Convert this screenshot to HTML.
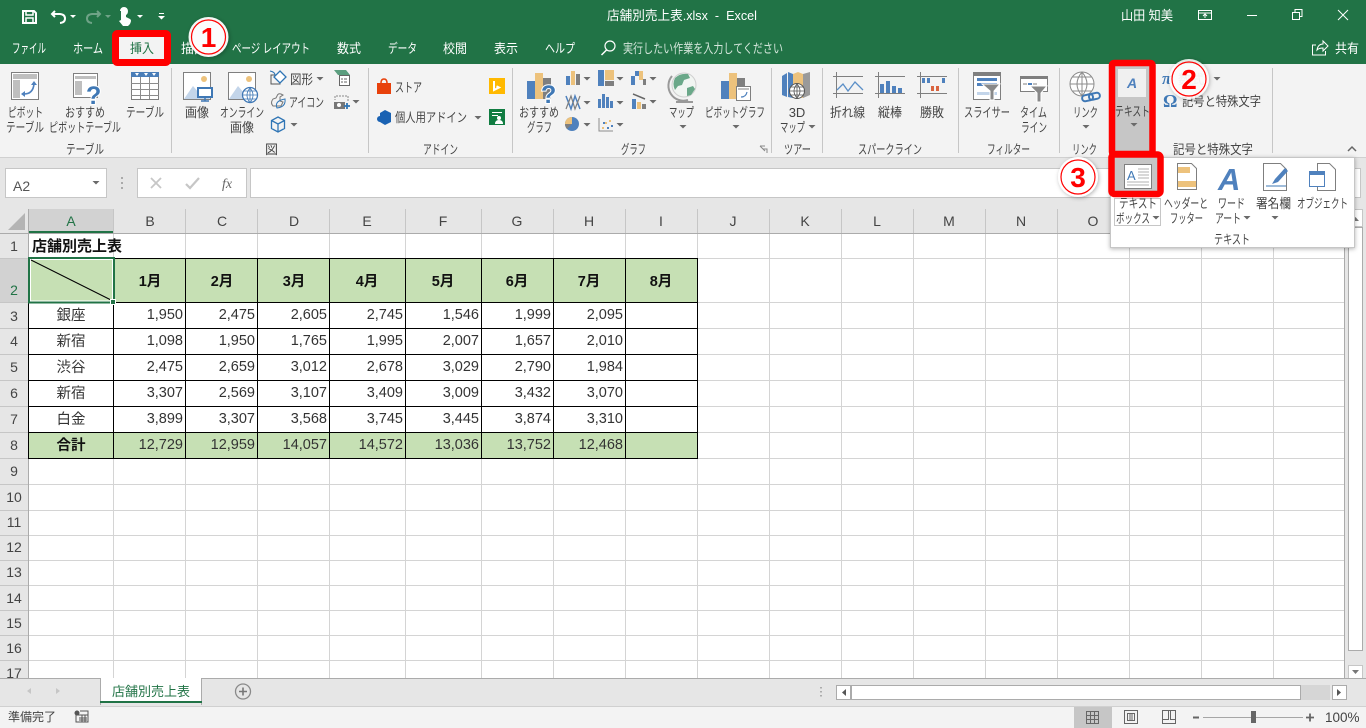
<!DOCTYPE html>
<html lang="ja"><head><meta charset="utf-8"><title>店舗別売上表.xlsx - Excel</title>
<style>
html,body{margin:0;padding:0;background:#fff;width:1366px;height:728px;overflow:hidden}
svg{display:block}
text{font-family:"Liberation Sans","Noto Sans CJK JP",sans-serif;white-space:pre}
.w{fill:#fff;font-size:13px}
.l{fill:#444;font-size:13px}
.g{fill:#444;font-size:13px}
.h{fill:#444;font-size:14px;text-anchor:middle}
.r{fill:#444;font-size:14px;text-anchor:middle}
.n{fill:#333;font-size:14.5px;text-anchor:end}
.c{fill:#333;font-size:14.5px;text-anchor:middle}
.b{fill:#111;font-size:14.5px;font-weight:bold;text-anchor:middle}
.m{text-anchor:middle}
.d{fill:none;stroke:#d4d4d4}
</style></head><body>
<svg xmlns="http://www.w3.org/2000/svg" width="1366" height="728" viewBox="0 0 1366 728">
<defs>
<path id="d" d="M-3.500 0h7l-3.500 3.500z" fill="#6a6a6a"/>
<filter id="sh" x="-30%" y="-30%" width="160%" height="160%"><feDropShadow dx="1" dy="1" stdDeviation="2" flood-color="#000" flood-opacity=".3"/></filter>
<filter id="ps" x="-5%" y="-5%" width="110%" height="115%"><feDropShadow dx="0" dy="1" stdDeviation="2" flood-color="#000" flood-opacity=".3"/></filter>
</defs>
<!-- backgrounds -->
<rect width="1366" height="64" fill="#217346"/>
<rect y="64" width="1366" height="93" fill="#f3f3f3"/>
<rect y="157" width="1366" height="51" fill="#e6e6e6"/>
<rect y="157" width="1366" height="1" fill="#d0d0d0"/>
<!-- QAT -->
<g fill="none" stroke="#fff" stroke-width="2">
<path d="M23 11h11l2 2v10H23z"/><path d="M26 11v4h7v-4M26 23v-5h7v5" stroke-width="1.500"/>
<path d="M55 11l-3 3 3 3M52 14H60q5 .5 5 4.500t-5 4.500"/>
<path d="M97 11l3 3-3 3M100 14H92q-5 .5-5 4.500t5 4.500" stroke="#6fa387"/>
</g>
<path d="M70 15h6l-3 3z" fill="#fff"/><path d="M105 15h6l-3 3z" fill="#6fa387"/>
<path d="M120 11a4 4 0 0 1 8 0q0 3-2 4v2l4 2q2 1 0 5l-2 2h-5l-4-5 2-1v-9z" fill="#fff"/>
<path d="M137 15h6l-3 3z" fill="#fff"/><path d="M159 13h5v1h-5zM158 16h7l-3.500 3.500z" fill="#fff"/>
<!-- title -->
<text class="w" x="607" y="20" textLength="150" lengthAdjust="spacingAndGlyphs">店舗別売上表.xlsx  -  Excel</text>
<text class="w" x="1121" y="20" textLength="52" lengthAdjust="spacingAndGlyphs">山田 知美</text>
<g fill="none" stroke="#fff">
<path d="M1198.500 10.500h13v9h-13zM1198.500 13h13M1205 18v-3.500M1203 16l2-2 2 2"/>
<path d="M1247 15.500h10"/>
<path d="M1292.500 12.500h7v7h-7zM1295 12v-2.500h7v7h-2.500"/>
<path d="M1338 10l10 10M1348 10l-10 10"/>
</g>
<!-- tabs -->
<text class="w" x="12" y="53" textLength="34" lengthAdjust="spacingAndGlyphs">ファイル</text>
<text class="w" x="73" y="53" textLength="30" lengthAdjust="spacingAndGlyphs">ホーム</text>
<text class="w" x="181" y="53" textLength="26" lengthAdjust="spacingAndGlyphs">描画</text>
<text class="w" x="232" y="53" textLength="78" lengthAdjust="spacingAndGlyphs">ページ レイアウト</text>
<text class="w" x="337" y="53" textLength="24" lengthAdjust="spacingAndGlyphs">数式</text>
<text class="w" x="388" y="53" textLength="29" lengthAdjust="spacingAndGlyphs">データ</text>
<text class="w" x="443" y="53" textLength="24" lengthAdjust="spacingAndGlyphs">校閲</text>
<text class="w" x="494" y="53" textLength="24" lengthAdjust="spacingAndGlyphs">表示</text>
<text class="w" x="545" y="53" textLength="30" lengthAdjust="spacingAndGlyphs">ヘルプ</text>
<circle cx="610" cy="46" r="5" fill="none" stroke="#fff" stroke-width="1.200"/><path d="M606.500 50l-5 5" stroke="#fff" stroke-width="1.500"/>
<text x="623" y="53" font-size="13" fill="#d3e5da" textLength="160" lengthAdjust="spacingAndGlyphs">実行したい作業を入力してください</text>
<path d="M1316 45h-3.500v10h13v-4M1317 50q1-6 6-6v-3l5 5-5 5v-3q-4 0-6 2z" fill="none" stroke="#fff"/>
<text class="w" x="1335" y="53" textLength="24" lengthAdjust="spacingAndGlyphs">共有</text>
<!-- insert tab -->
<rect x="115.500" y="33.500" width="52" height="29" rx="2" fill="#f3f3f3" stroke="#f00" stroke-width="7"/>
<text x="130" y="53" font-size="13" fill="#217346" textLength="24" lengthAdjust="spacingAndGlyphs">挿入</text>
<!-- separators -->
<path d="M171.500 68v85M368.500 68v85M512.500 68v85M771.500 68v85M822.500 68v85M958.500 68v85M1059.500 68v85M1272.500 68v85" stroke="#c6c6c6"/>
<!-- Table group -->
<rect x="11.500" y="72.500" width="27" height="27" fill="#fff" stroke="#7f7f7f"/><rect x="13" y="74" width="24" height="5" fill="#bfbfbf"/><rect x="13" y="80" width="7" height="18" fill="#bfbfbf"/>
<path d="M24 94q9 0 10-10" fill="none" stroke="#4f81bd" stroke-width="1.600"/><path d="M21 94l4-3v6zM34 81l-3 4h6z" fill="#4f81bd"/>
<rect x="73.500" y="73.500" width="24" height="24" fill="#fff" stroke="#7f7f7f"/><rect x="75" y="76" width="21" height="3" fill="#bfbfbf"/><rect x="75" y="81" width="7" height="14" fill="#bfbfbf"/>
<text x="86" y="104" font-size="25" font-weight="bold" fill="#fff" stroke="#fff" stroke-width="2">?</text>
<text x="86" y="104" font-size="25" font-weight="bold" fill="#3f78b5">?</text>
<rect x="131.500" y="72.500" width="27" height="27" fill="#fff" stroke="#7f7f7f"/><rect x="131" y="72" width="28" height="5" fill="#4a7eb8"/><path d="M131 83.500h28M131 89.500h28M131 95.500h28M140.500 77v22M149.500 77v22" stroke="#8c8c8c"/>
<path d="M135 73l2 3 2-3zM144 73l2 3 2-3zM152 73l2 3 2-3z" fill="#fff"/>
<!-- picture -->
<g id="pic"><rect x="183.500" y="72.500" width="27" height="27" fill="#fff" stroke="#7f7f7f"/><circle cx="204" cy="79" r="3" fill="#edc27c"/><path d="M184 99l9-13 6 7 4-4 7 10z" fill="#c3d5ea"/></g>
<rect x="198" y="88" width="14" height="9" fill="#fff" stroke="#3f78b5" stroke-width="2"/><path d="M201 101h8M205 97v4" stroke="#3f78b5" stroke-width="1.500"/>
<rect x="228.500" y="72.500" width="27" height="27" fill="#fff" stroke="#7f7f7f"/><circle cx="249" cy="79" r="3" fill="#edc27c"/><path d="M229 99l9-13 6 7 4-4 7 10z" fill="#c3d5ea"/>
<circle cx="250" cy="95" r="7.500" fill="#fff" stroke="#3f78b5" stroke-width="1.300"/><path d="M243 95h15M244 91h12M244 99h12M250 88v15M250 88q-6 7 0 15M250 88q6 7 0 15" fill="none" stroke="#3f78b5" stroke-width=".8"/>
<path d="M271 75h9v9h-9z" fill="none" stroke="#555"/><path d="M280 71l6 6-6 6-6-6z" fill="#fff" stroke="#2f75b5" stroke-width="1.300"/>
<path d="M270 71q5 1 5 4" fill="none" stroke="#2f75b5"/>
<path d="M277 96q1-3 4-2l2 1-3 2v4l3 1-2 4h-8q-3-3 0-7l3-1z" fill="none" stroke="#777"/><path d="M277 108q-3-7 8-9q1 8-8 9z" fill="none" stroke="#2f75b5"/>
<path d="M278 117l6.500 3.500v8L278 132l-6.500-3.500v-8zM271.500 120.500l6.500 3.500 6.500-3.500M278 124v8" fill="none" stroke="#2f75b5" stroke-width="1.300"/>
<text class="l" x="290" y="84" textLength="23" lengthAdjust="spacingAndGlyphs">図形</text><use href="#d" x="320" y="77"/>
<text class="l" x="289" y="107" textLength="35" lengthAdjust="spacingAndGlyphs">アイコン</text>
<use href="#d" x="294" y="123"/>
<path d="M334 70h12l4 5h-12z" fill="#5c9e7f"/><rect x="339.500" y="75.500" width="10" height="10" fill="#fff" stroke="#666"/><path d="M341 79h2M344 79h3M341 82h2M344 82h3" stroke="#666"/>
<path d="M336 96h12v5M335 96v4" stroke="#888" stroke-dasharray="2 1" fill="none"/><rect x="334" y="102" width="11" height="7" fill="#777"/><circle cx="339" cy="105" r="2" fill="#fff"/><path d="M344 106h6M347 103v6" stroke="#2f75b5" stroke-width="1.800"/>
<use href="#d" x="356" y="100"/>
<!-- labels -->
<text class="l" x="8" y="117" textLength="35" lengthAdjust="spacingAndGlyphs">ピボット</text>
<text class="l" x="6" y="132" textLength="38" lengthAdjust="spacingAndGlyphs">テーブル</text>
<text class="l" x="65" y="117" textLength="40" lengthAdjust="spacingAndGlyphs">おすすめ</text>
<text class="l" x="49" y="132" textLength="72" lengthAdjust="spacingAndGlyphs">ピボットテーブル</text>
<text class="l" x="126" y="117" textLength="38" lengthAdjust="spacingAndGlyphs">テーブル</text>
<text class="l" x="185" y="117" textLength="24" lengthAdjust="spacingAndGlyphs">画像</text>
<text class="l" x="220" y="117" textLength="44" lengthAdjust="spacingAndGlyphs">オンライン</text>
<text class="l" x="230" y="132" textLength="24" lengthAdjust="spacingAndGlyphs">画像</text>
<text class="g" x="66" y="154" textLength="38" lengthAdjust="spacingAndGlyphs">テーブル</text>
<text class="g" x="265" y="154">図</text>
<text class="g" x="423" y="154" textLength="35" lengthAdjust="spacingAndGlyphs">アドイン</text>
<text class="g" x="621" y="154" textLength="25" lengthAdjust="spacingAndGlyphs">グラフ</text>
<text class="g" x="784" y="154" textLength="27" lengthAdjust="spacingAndGlyphs">ツアー</text>
<text class="g" x="858" y="154" textLength="64" lengthAdjust="spacingAndGlyphs">スパークライン</text>
<text class="g" x="987" y="154" textLength="43" lengthAdjust="spacingAndGlyphs">フィルター</text>
<text class="g" x="1072" y="154" textLength="25" lengthAdjust="spacingAndGlyphs">リンク</text>
<text class="g" x="1173" y="154" textLength="80" lengthAdjust="spacingAndGlyphs">記号と特殊文字</text>
<path d="M763 149h4v4M760 146l5 5M760 146h5" fill="none" stroke="#888"/>
<path d="M1348 151l4-4 4 4" fill="none" stroke="#666" stroke-width="1.500"/>
<!-- add-ins -->
<path d="M377 83h14v11h-14z" fill="#e8410b"/><path d="M381 83q0-4 3-4t3 4" fill="none" stroke="#e8410b" stroke-width="1.500"/>
<text class="l" x="395" y="92" textLength="27" lengthAdjust="spacingAndGlyphs">ストア</text>
<path d="M385 110l6 3v9l-6 3-5-3v-9z" fill="#1a62b3"/><circle cx="380" cy="119" r="3" fill="#1a62b3"/>
<text class="l" x="395" y="122" textLength="72" lengthAdjust="spacingAndGlyphs">個人用アドイン</text><use href="#d" x="478" y="116"/>
<rect x="489" y="78" width="16" height="16" fill="#ffb900"/><path d="M494 81v9l5-2.500-2.500-1.200" fill="none" stroke="#fff" stroke-width="2"/>
<rect x="489" y="109" width="16" height="16" fill="#107c41"/><path d="M492 112h10v1h-10zM492 115h6v1h-6z" fill="#fff"/><circle cx="499" cy="118" r="2" fill="#fff"/><path d="M495 124q0-4 4-4t4 4z" fill="#fff"/>
<!-- charts -->
<g id="bars"><rect x="527" y="81" width="8" height="18" fill="#4f81bd"/><rect x="535" y="73" width="8" height="26" fill="#edc27c"/><rect x="543" y="78" width="8" height="21" fill="#7f7f7f"/></g>
<text x="541" y="103" font-size="25" font-weight="bold" fill="#fff" stroke="#fff" stroke-width="2">?</text>
<text x="541" y="103" font-size="25" font-weight="bold" fill="#3f78b5">?</text>
<text class="l" x="519" y="117" textLength="40" lengthAdjust="spacingAndGlyphs">おすすめ</text>
<text class="l" x="527" y="132" textLength="25" lengthAdjust="spacingAndGlyphs">グラフ</text>
<rect x="566" y="76" width="4" height="9" fill="#4f81bd"/><rect x="571" y="71" width="4" height="14" fill="#edc27c"/><rect x="576" y="74" width="4" height="11" fill="#7f7f7f"/><use href="#d" x="587" y="77"/>
<path d="M566 96l5 13 4-13 5 13" fill="none" stroke="#4f81bd" stroke-width="1.500"/><path d="M566 109l5-13 4 13 5-13" fill="none" stroke="#7f7f7f" stroke-width="1.200"/><use href="#d" x="587" y="101"/>
<circle cx="572" cy="124" r="7" fill="#4f81bd"/><path d="M572 124v-7a7 7 0 0 0-7 7z" fill="#edc27c"/><path d="M572 124h-7a7 7 0 0 0 2 5z" fill="#7f7f7f"/><use href="#d" x="587" y="123"/>
<rect x="598" y="70" width="6" height="16" fill="#4f81bd"/><rect x="605" y="70" width="9" height="10" fill="#edc27c"/><rect x="605" y="81" width="9" height="5" fill="#7f7f7f"/><use href="#d" x="620" y="77"/>
<rect x="598" y="99" width="3" height="9" fill="#4f81bd"/><rect x="602" y="94" width="3" height="14" fill="#4f81bd"/><rect x="606" y="97" width="3" height="11" fill="#4f81bd"/><rect x="610" y="101" width="3" height="7" fill="#4f81bd"/><use href="#d" x="620" y="101"/>
<path d="M599 118v13h14" fill="none" stroke="#8c8c8c"/><path d="M602 127h2v2h-2zM605 122h2v2h-2zM609 120h2v2h-2z" fill="#edc27c"/><path d="M603 122h2v2h-2zM607 127h2v2h-2zM611 125h2v2h-2z" fill="#4f81bd"/><use href="#d" x="620" y="123"/>
<path d="M631 76h4v9h-4zM635 71h4v5h-4z" fill="#4f81bd"/><rect x="639" y="71" width="4" height="9" fill="#edc27c"/><rect x="643" y="79" width="3" height="6" fill="#7f7f7f"/><use href="#d" x="653" y="77"/>
<rect x="632" y="99" width="4" height="10" fill="#4f81bd"/><rect x="637" y="102" width="4" height="7" fill="#edc27c"/><rect x="642" y="104" width="4" height="5" fill="#7f7f7f"/><path d="M633 94l12 5" stroke="#666" stroke-width="1.500"/><use href="#d" x="653" y="100"/>
<!-- map -->
<circle cx="684" cy="85" r="12" fill="#f1f5f2" stroke="#cfcfcf"/><path d="M675 78q5-5 13-4l2 4-6 2-2 5-4 1-3 4q-3-6 0-12zM687 88l6-2 2 3-4 6-4 1z" fill="#6aa889"/><path d="M672 76a15 15 0 0 0 16 24" fill="none" stroke="#999" stroke-width="2"/><path d="M676 102h17" stroke="#999" stroke-width="2"/>
<text class="l" x="669" y="117" textLength="25" lengthAdjust="spacingAndGlyphs">マップ</text><use href="#d" x="683" y="125"/>
<rect x="721" y="81" width="8" height="18" fill="#4f81bd"/><rect x="729" y="73" width="8" height="26" fill="#edc27c"/><rect x="737" y="78" width="8" height="21" fill="#7f7f7f"/>
<rect x="736.500" y="86.500" width="14" height="14" fill="#fff" stroke="#7f7f7f"/><rect x="738" y="88" width="11" height="2" fill="#bfbfbf"/><path d="M741 97q5 0 6-5" fill="none" stroke="#4f81bd" stroke-width="1.200"/>
<text class="l" x="705" y="117" textLength="60" lengthAdjust="spacingAndGlyphs">ピボットグラフ</text><use href="#d" x="736" y="125"/>
<!-- 3D map -->
<path d="M782 76l5-3v24l-5-2z" fill="#4f81bd"/><path d="M788 72l5 2v24l-5-1z" fill="#4f81bd"/><path d="M793 74l5-2v24l-5 1z" fill="#edc27c"/><path d="M798 72l5 2v24l-5-1z" fill="#edc27c"/><path d="M803 74l7-2v23l-7 3z" fill="#9a9a9a"/>
<circle cx="797" cy="91" r="7.500" fill="#fff" stroke="#555"/><path d="M790 91h14M791 87h12M791 95h12M797 84v14M797 84q-6 7 0 14M797 84q6 7 0 14" fill="none" stroke="#555" stroke-width=".8"/>
<text class="l m" x="797" y="117">3D</text>
<text class="l" x="780" y="132" textLength="25" lengthAdjust="spacingAndGlyphs">マップ</text><use href="#d" x="812" y="125"/>
<!-- sparklines -->
<g stroke="#7f7f7f" fill="none"><path d="M833 76.500h30M833 93.500h30M836.500 72v26M875 76.500h30M875 93.500h30M878.500 72v26M917 76.500h30M917 93.500h30M920.500 72v26"/></g>
<path d="M837 90l6-6 5 7 7-9 8 8" fill="none" stroke="#5b8fc7" stroke-width="1.300"/>
<path d="M880 84h4v9h-4zM886 81h4v12h-4zM892 86h4v7h-4zM898 88h4v5h-4z" fill="#4f81bd"/>
<path d="M922 78h3v5h-3zM927 78h3v5h-3zM942 78h3v5h-3z" fill="#4f81bd"/><path d="M931 86h3v5h-3zM936 86h3v5h-3z" fill="#d9643f"/>
<text class="l" x="830" y="117" textLength="35" lengthAdjust="spacingAndGlyphs">折れ線</text>
<text class="l" x="878" y="117" textLength="24" lengthAdjust="spacingAndGlyphs">縦棒</text>
<text class="l" x="920" y="117" textLength="24" lengthAdjust="spacingAndGlyphs">勝敗</text>
<!-- filters -->
<rect x="973.500" y="72.500" width="27" height="27" fill="#fff" stroke="#7f7f7f"/><rect x="973" y="72" width="28" height="4" fill="#7f7f7f"/><rect x="977" y="78" width="20" height="3" fill="#4f81bd"/><rect x="977" y="83" width="20" height="3" fill="#4f81bd"/><rect x="977" y="92" width="20" height="3" fill="#c3d5ea"/><path d="M982 84h18l-6 7v9h-4v-9z" fill="#888" stroke="#fff"/>
<rect x="1020.500" y="76.500" width="27" height="15" fill="#fff" stroke="#7f7f7f"/><rect x="1020" y="76" width="28" height="3" fill="#7f7f7f"/><path d="M1023 83h4v2h-4zM1033 83h4v2h-4z" fill="#bfbfbf"/><path d="M1028 83h4v2h-4z" fill="#4f81bd"/><path d="M1030 86h17l-6 7v9h-4v-9z" fill="#888" stroke="#fff"/>
<text class="l" x="964" y="117" textLength="46" lengthAdjust="spacingAndGlyphs">スライサー</text>
<text class="l" x="1020" y="117" textLength="27" lengthAdjust="spacingAndGlyphs">タイム</text>
<text class="l" x="1021" y="132" textLength="26" lengthAdjust="spacingAndGlyphs">ライン</text>
<!-- link -->
<circle cx="1082" cy="84" r="12" fill="#fff" stroke="#8c8c8c"/><path d="M1070 84h24M1072 77h20M1072 91h20M1082 72v24M1082 72q-10 12 0 24M1082 72q10 12 0 24" fill="none" stroke="#8c8c8c"/>
<g fill="none" stroke="#3f78b5" stroke-width="2" transform="rotate(-12 1091 97)"><rect x="1082" y="94" width="11" height="6" rx="3"/><rect x="1089" y="94" width="11" height="6" rx="3"/></g>
<text class="l" x="1073" y="117" textLength="25" lengthAdjust="spacingAndGlyphs">リンク</text><use href="#d" x="1086" y="125"/>
<!-- text button -->
<rect x="1112" y="63" width="40.500" height="91" fill="#c6c6c6" stroke="#f00" stroke-width="6.500" rx="2"/>
<rect x="1118" y="69" width="28" height="28" fill="#f0f0f0"/>
<text x="1127" y="88" font-size="14" font-weight="bold" font-style="italic" fill="#4f81bd">A</text>
<text class="l" x="1115" y="116" textLength="35" lengthAdjust="spacingAndGlyphs">テキスト</text><use href="#d" x="1134" y="123"/>
<!-- symbols -->
<text x="1162" y="84" font-size="17" font-style="italic" font-weight="bold" fill="#3f78b5" style="font-family:'Liberation Serif',serif">π</text>
<text class="l" x="1178" y="84" textLength="26" lengthAdjust="spacingAndGlyphs" fill-opacity=".7">数式</text>
<use href="#d" x="1217" y="77"/>
<text x="1163" y="107" font-size="18" font-weight="bold" fill="#3f78b5" style="font-family:'Liberation Serif',serif">Ω</text>
<text class="l" x="1182" y="106" textLength="79" lengthAdjust="spacingAndGlyphs">記号と特殊文字</text>
<!-- formula bar -->
<rect x="5.500" y="168.500" width="101" height="29" fill="#fff" stroke="#c6c6c6"/>
<text x="13" y="191" font-size="14" fill="#555">A2</text><use href="#d" x="96" y="181"/>
<path d="M122 177v2M122 182v2M122 187v2" stroke="#aaa" stroke-width="2"/>
<rect x="137.500" y="168.500" width="109" height="29" fill="#fff" stroke="#c6c6c6"/>
<path d="M151 178l10 10M161 178l-10 10" stroke="#c6c6c6" stroke-width="1.800"/>
<path d="M186 184l4 4 9-10" fill="none" stroke="#c6c6c6" stroke-width="2.200"/>
<text x="222" y="188" font-size="14" font-style="italic" fill="#666" style="font-family:'Liberation Serif',serif">fx</text>
<rect x="250.500" y="168.500" width="1110" height="29" fill="#fff" stroke="#c6c6c6"/>
<!-- sheet -->
<rect y="208" width="1366" height="471" fill="#e6e6e6"/>
<rect x="29" y="234" width="1316" height="444" fill="#fff"/>
<!-- fills -->
<rect x="29" y="259" width="669" height="44" fill="#c6e0b4"/>
<rect x="29" y="433" width="669" height="26" fill="#c6e0b4"/>
<rect x="29" y="209" width="84" height="24" fill="#d2d2d2"/>
<rect x="0" y="259" width="28" height="44" fill="#d2d2d2"/>
<!-- gridlines -->
<path class="d" d="M113.500 234V678M185.500 234V678M257.500 234V678M329.500 234V678M405.500 234V678M481.500 234V678M553.500 234V678M625.500 234V678M697.500 234V678M769.500 234V678M841.500 234V678M913.500 234V678M985.500 234V678M1057.500 234V678M1129.500 234V678M1201.500 234V678M1273.500 234V678M29 258.500H1345M29 302.500H1345M29 328.500H1345M29 354.500H1345M29 380.500H1345M29 406.500H1345M29 432.500H1345M29 458.500H1345M29 484.500H1345M29 510.500H1345M29 535.500H1345M29 560.500H1345M29 585.500H1345M29 610.500H1345M29 635.500H1345M29 660.500H1345"/>
<path d="M113.500 209V233M185.500 209V233M257.500 209V233M329.500 209V233M405.500 209V233M481.500 209V233M553.500 209V233M625.500 209V233M697.500 209V233M769.500 209V233M841.500 209V233M913.500 209V233M985.500 209V233M1057.500 209V233M1129.500 209V233M1201.500 209V233M1273.500 209V233" stroke="#c6c6c6"/>
<path d="M0 258.500H28M0 302.500H28M0 328.500H28M0 354.500H28M0 380.500H28M0 406.500H28M0 432.500H28M0 458.500H28M0 484.500H28M0 510.500H28M0 535.500H28M0 560.500H28M0 585.500H28M0 610.500H28M0 635.500H28M0 660.500H28" stroke="#c6c6c6"/>
<path d="M0 233.500H1345M28.500 209V678M1344.500 209V678" stroke="#ababab"/>
<rect x="29" y="231" width="84" height="2" fill="#217346"/>
<path d="M8 230h17v-17z" fill="#b4b4b4"/>
<!-- table borders -->
<path d="M28.500 258V459M113.500 258V459M185.500 258V459M257.500 258V459M329.500 258V459M405.500 258V459M481.500 258V459M553.500 258V459M625.500 258V459M697.500 258V459M28 258.500H698M28 302.500H698M28 328.500H698M28 354.500H698M28 380.500H698M28 406.500H698M28 432.500H698M28 458.500H698" stroke="#000"/>
<!-- selection -->
<rect x="29" y="258" width="85" height="44.500" fill="none" stroke="#217346" stroke-width="2"/>
<rect x="30.500" y="259.500" width="82" height="41.500" fill="none" stroke="#fff"/>
<path d="M31 260L111 300" stroke="#000"/>
<rect x="110.500" y="299.500" width="5" height="5" fill="#217346" stroke="#fff"/>
<!-- headers -->
<text class="h" x="71" y="226" style="fill:#217346">A</text>
<text class="h" x="150" y="226">B</text><text class="h" x="222" y="226">C</text><text class="h" x="294" y="226">D</text><text class="h" x="367" y="226">E</text><text class="h" x="443" y="226">F</text><text class="h" x="517" y="226">G</text><text class="h" x="589" y="226">H</text><text class="h" x="661" y="226">I</text><text class="h" x="733" y="226">J</text><text class="h" x="805" y="226">K</text><text class="h" x="877" y="226">L</text><text class="h" x="949" y="226">M</text><text class="h" x="1021" y="226">N</text><text class="h" x="1093" y="226">O</text>
<text class="r" x="14" y="251">1</text><text class="r" x="14" y="295" style="fill:#217346">2</text><text class="r" x="14" y="321">3</text><text class="r" x="14" y="346">4</text><text class="r" x="14" y="372">5</text><text class="r" x="14" y="398">6</text><text class="r" x="14" y="424">7</text><text class="r" x="14" y="450">8</text><text class="r" x="14" y="476">9</text><text class="r" x="14" y="502">10</text><text class="r" x="14" y="527">11</text><text class="r" x="14" y="552">12</text><text class="r" x="14" y="577">13</text><text class="r" x="14" y="603">14</text><text class="r" x="14" y="628">15</text><text class="r" x="14" y="653">16</text><text class="r" x="14" y="678">17</text>
<!-- cells -->
<text x="32" y="251" font-size="15" font-weight="bold" fill="#111">店舗別売上表</text>
<text class="b" x="150" y="286">1月</text><text class="b" x="222" y="286">2月</text><text class="b" x="294" y="286">3月</text><text class="b" x="367" y="286">4月</text><text class="b" x="443" y="286">5月</text><text class="b" x="517" y="286">6月</text><text class="b" x="589" y="286">7月</text><text class="b" x="661" y="286">8月</text>
<text class="c" x="71" y="320">銀座</text><text class="c" x="71" y="346">新宿</text><text class="c" x="71" y="372">渋谷</text><text class="c" x="71" y="398">新宿</text><text class="c" x="71" y="424">白金</text><text class="b" x="71" y="450">合計</text>
<text class="n" x="183" y="319">1,950</text><text class="n" x="255" y="319">2,475</text><text class="n" x="327" y="319">2,605</text><text class="n" x="403" y="319">2,745</text><text class="n" x="479" y="319">1,546</text><text class="n" x="551" y="319">1,999</text><text class="n" x="623" y="319">2,095</text>
<text class="n" x="183" y="345">1,098</text><text class="n" x="255" y="345">1,950</text><text class="n" x="327" y="345">1,765</text><text class="n" x="403" y="345">1,995</text><text class="n" x="479" y="345">2,007</text><text class="n" x="551" y="345">1,657</text><text class="n" x="623" y="345">2,010</text>
<text class="n" x="183" y="371">2,475</text><text class="n" x="255" y="371">2,659</text><text class="n" x="327" y="371">3,012</text><text class="n" x="403" y="371">2,678</text><text class="n" x="479" y="371">3,029</text><text class="n" x="551" y="371">2,790</text><text class="n" x="623" y="371">1,984</text>
<text class="n" x="183" y="397">3,307</text><text class="n" x="255" y="397">2,569</text><text class="n" x="327" y="397">3,107</text><text class="n" x="403" y="397">3,409</text><text class="n" x="479" y="397">3,009</text><text class="n" x="551" y="397">3,432</text><text class="n" x="623" y="397">3,070</text>
<text class="n" x="183" y="423">3,899</text><text class="n" x="255" y="423">3,307</text><text class="n" x="327" y="423">3,568</text><text class="n" x="403" y="423">3,745</text><text class="n" x="479" y="423">3,445</text><text class="n" x="551" y="423">3,874</text><text class="n" x="623" y="423">3,310</text>
<text class="n" x="183" y="449">12,729</text><text class="n" x="255" y="449">12,959</text><text class="n" x="327" y="449">14,057</text><text class="n" x="403" y="449">14,572</text><text class="n" x="479" y="449">13,036</text><text class="n" x="551" y="449">13,752</text><text class="n" x="623" y="449">12,468</text>
<!-- v scroll -->
<rect x="1345" y="209" width="21" height="470" fill="#e6e6e6"/>
<rect x="1348.500" y="227.500" width="14" height="423" fill="#fff" stroke="#ababab"/>
<rect x="1348.500" y="665.500" width="14" height="13" fill="#fff" stroke="#c6c6c6"/><path d="M1352 670h7l-3.500 4z" fill="#777"/>
<rect x="1348.500" y="209.500" width="14" height="17" fill="#fff" stroke="#c6c6c6"/><path d="M1352 221h7l-3.500-4z" fill="#777"/>
<!-- tabs bar -->
<rect y="679" width="1366" height="27" fill="#e6e6e6"/>
<rect y="678" width="1366" height="1" fill="#ababab"/>
<path d="M100.500 678v27M201.500 678v27" stroke="#ababab"/>
<rect x="101" y="678" width="100" height="24" fill="#fff"/>
<rect x="100" y="701" width="102" height="2" fill="#217346"/>
<text x="112" y="696" font-size="13" fill="#217346" textLength="78">店舗別売上表</text>
<path d="M31 688v6l-4-3zM56 688v6l4-3z" fill="#c6c6c6"/>
<circle cx="243" cy="691.500" r="7.500" fill="none" stroke="#8a8a8a" stroke-width="1.300"/><path d="M239 691.500h8M243 687.500v8" stroke="#777" stroke-width="1.600"/>
<path d="M821 687v1.500M821 691v1.500M821 695v1.500" stroke="#999" stroke-width="1.500"/>
<rect x="836.500" y="685.500" width="14" height="14" fill="#fff" stroke="#ababab"/><path d="M846 689v7l-4-3.500z" fill="#555"/>
<rect x="851" y="685" width="479" height="15" fill="#d6d6d6"/>
<rect x="851.500" y="685.500" width="449" height="14" fill="#fff" stroke="#ababab"/>
<rect x="1332.500" y="685.500" width="14" height="14" fill="#fff" stroke="#ababab"/><path d="M1337 689v7l4-3.500z" fill="#555"/>
<!-- status -->
<rect y="706" width="1366" height="22" fill="#f3f3f3"/>
<rect y="706" width="1366" height="1" fill="#d0d0d0"/>
<text x="8" y="721" font-size="12" fill="#444" textLength="48">準備完了</text>
<circle cx="77" cy="713" r="2.500" fill="#555"/><path d="M80 711h8v11H76v-7h12M79 718h8M79 720h8M82 715v7M85 715v7" fill="none" stroke="#555"/>
<rect x="1074" y="707" width="38" height="21" fill="#c6c6c6"/>
<path d="M1086.500 711.500h12v12h-12zM1086.500 715.500h12M1086.500 719.500h12M1090.500 711.500v12M1094.500 711.500v12" fill="none" stroke="#666"/>
<path d="M1124.500 710.500h13v13h-13zM1127.500 713.500h7v7h-7zM1129 715h4M1129 717h4M1129 719h4" fill="none" stroke="#666"/>
<path d="M1162.500 710.500h13v13h-13zM1162.500 719.500h6v-9M1175.500 719.500h-5v-9" fill="none" stroke="#666"/>
<path d="M1193 717.500h6" stroke="#666" stroke-width="2"/>
<path d="M1203 717.500h100" stroke="#a6a6a6"/>
<rect x="1251" y="711" width="5" height="12" fill="#666"/>
<path d="M1306 717.500h8M1310 713.500v8" stroke="#666" stroke-width="1.800"/>
<text x="1325" y="722" font-size="13.500" fill="#444">100%</text>
<!-- dropdown panel -->
<rect x="1110.500" y="157.500" width="244" height="90" fill="#fff" stroke="#c6c6c6" filter="url(#ps)"/>
<rect x="1114.500" y="198.500" width="46" height="27" fill="none" stroke="#c6c6c6"/>
<rect x="1111.500" y="154.500" width="49" height="39.500" rx="3" fill="#c6c6c6" stroke="#f00" stroke-width="6.500"/>
<rect x="1124.500" y="164.500" width="27" height="24" fill="#fff" stroke="#7f7f7f"/>
<text x="1127" y="180" font-size="13" fill="#3f78b5">A</text><path d="M1138 169h11M1138 172h11M1138 175h11M1138 178h11M1127 182h22M1127 185h22" stroke="#b0b0b0"/>
<path d="M1177.500 163.500h14l5 5v21h-19z" fill="#fff" stroke="#7f7f7f"/><rect x="1178" y="167" width="12" height="6" fill="#edc27c"/><rect x="1178" y="181" width="18" height="6" fill="#edc27c"/>
<text x="1218" y="190" font-size="31" font-weight="bold" font-style="italic" fill="#4f81bd">A</text>
<path d="M1263.500 163.500h17l6 6v21h-23z" fill="#fff" stroke="#7f7f7f"/><path d="M1266 186h20" stroke="#3f78b5"/><path d="M1272 184l3-5 10-11 3 3-10 11z" fill="#4f81bd"/>
<path d="M1317.500 163.500h12l6 6v21h-18z" fill="#fff" stroke="#7f7f7f"/><rect x="1309.500" y="171.500" width="15" height="15" fill="#fff" stroke="#4f81bd"/><rect x="1309" y="171" width="16" height="4" fill="#4f81bd"/>
<text class="l" x="1119" y="208" textLength="38" lengthAdjust="spacingAndGlyphs">テキスト</text>
<text class="l" x="1116" y="223" textLength="34" lengthAdjust="spacingAndGlyphs">ボックス</text><use href="#d" x="1156" y="216"/>
<text class="l" x="1164" y="208" textLength="44" lengthAdjust="spacingAndGlyphs">ヘッダーと</text>
<text class="l" x="1170" y="223" textLength="33" lengthAdjust="spacingAndGlyphs">フッター</text>
<text class="l" x="1218" y="208" textLength="27" lengthAdjust="spacingAndGlyphs">ワード</text>
<text class="l" x="1215" y="223" textLength="26" lengthAdjust="spacingAndGlyphs">アート</text><use href="#d" x="1247" y="216"/>
<text class="l" x="1256" y="208" textLength="35" lengthAdjust="spacingAndGlyphs">署名欄</text><use href="#d" x="1275" y="216"/>
<text class="l" x="1297" y="208" textLength="51" lengthAdjust="spacingAndGlyphs">オブジェクト</text>
<text class="g" x="1214" y="244" textLength="36" lengthAdjust="spacingAndGlyphs">テキスト</text>
<!-- annotations -->
<g filter="url(#sh)"><circle cx="208.500" cy="37" r="20" fill="#fff" fill-opacity=".95"/></g>
<circle cx="208.500" cy="37" r="17" fill="#fff" fill-opacity=".6" stroke="#f00" stroke-width="1.200"/>
<text x="208.500" y="47" font-size="28" font-weight="bold" fill="#f00" text-anchor="middle">1</text>
<g filter="url(#sh)"><circle cx="1189" cy="79" r="20" fill="#fff" fill-opacity=".85"/></g>
<circle cx="1189" cy="79" r="17" fill="#fff" fill-opacity=".3" stroke="#f00" stroke-width="1.200"/>
<text x="1189" y="89" font-size="28" font-weight="bold" fill="#f00" text-anchor="middle">2</text>
<g filter="url(#sh)"><circle cx="1078" cy="177" r="20" fill="#fff"/></g>
<circle cx="1078" cy="177" r="17" fill="none" stroke="#f00" stroke-width="1.200"/>
<text x="1078" y="187" font-size="28" font-weight="bold" fill="#f00" text-anchor="middle">3</text>
</svg>
</body></html>
